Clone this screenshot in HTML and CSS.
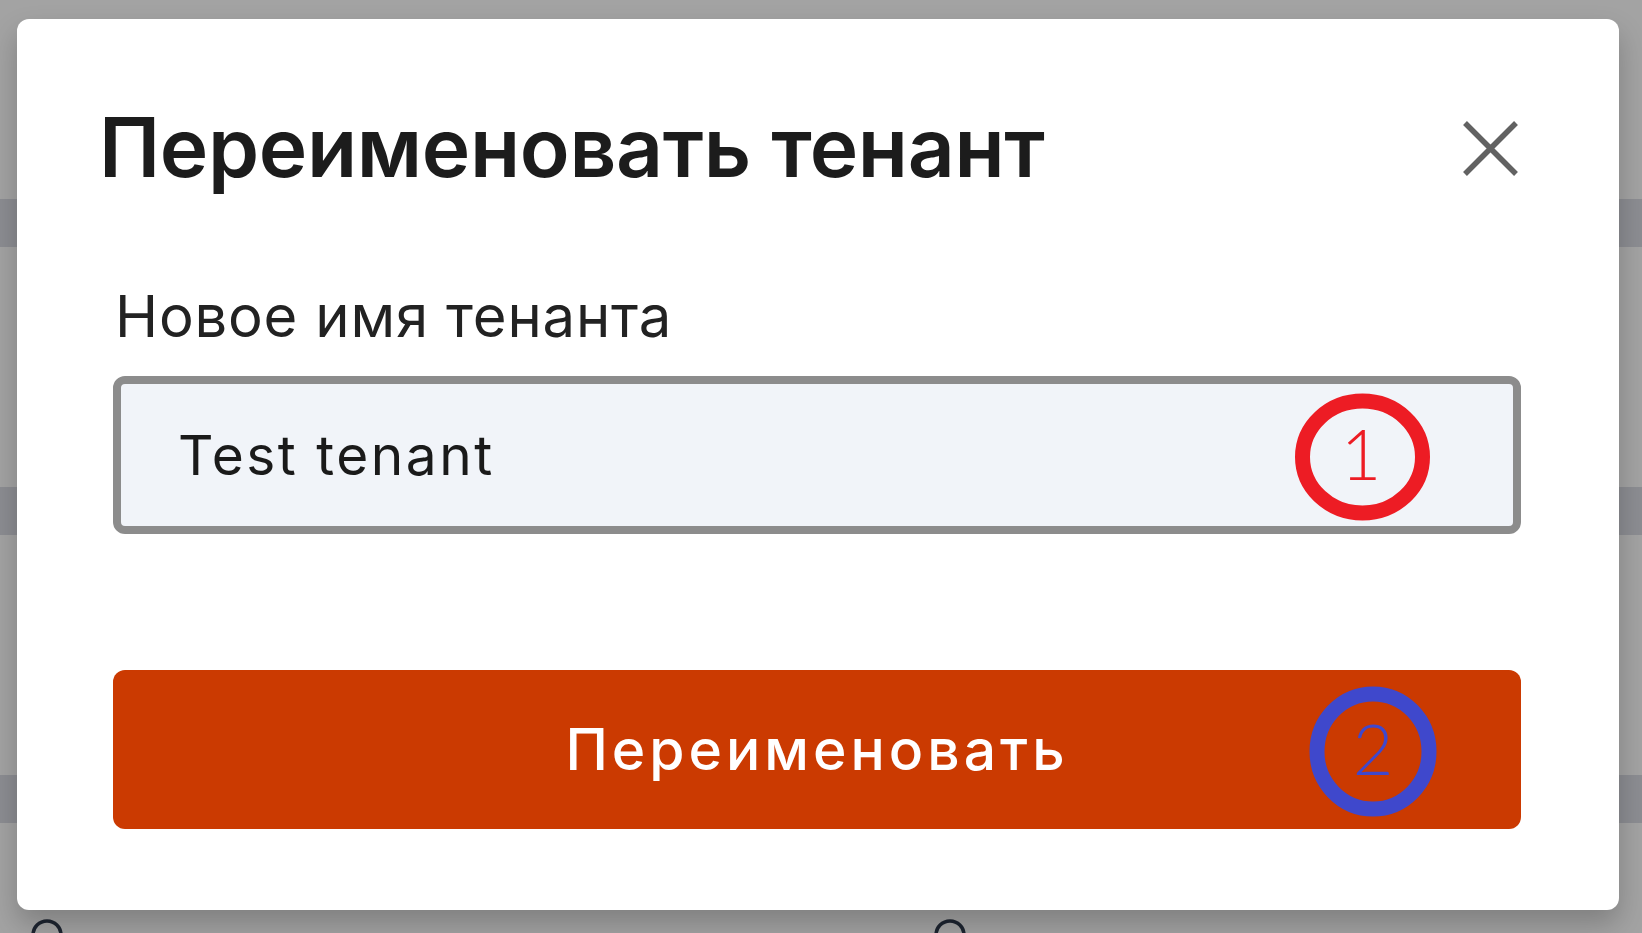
FILE: index.html
```html
<!DOCTYPE html>
<html lang="ru">
<head>
<meta charset="utf-8">
<title>Переименовать тенант</title>
<link rel="stylesheet" href="styles.css">
</head>
<body>
<div class="page">
  <div class="row"></div>
  <div class="row"></div>
  <div class="row"></div>
  <div class="foot">
    <svg class="ring" width="34" height="16" viewBox="0 0 34 16"><circle cx="17" cy="17" r="14" fill="none" stroke="#1d2430" stroke-width="3.5"/></svg>
    <svg class="ring" width="34" height="16" viewBox="0 0 34 16"><circle cx="17" cy="17" r="14" fill="none" stroke="#1d2430" stroke-width="3.5"/></svg>
  </div>
</div>

<div class="modal">
  <div class="header">
    <h1 class="title">Переименовать тенант</h1>
    <button class="close" aria-label="Закрыть">
      <svg width="57" height="57" viewBox="0 0 57 57"><path d="M3 3 L54 54 M54 3 L3 54" stroke="#626262" stroke-width="5.5" fill="none"/></svg>
    </button>
  </div>
  <div class="body">
    <label class="label">Новое имя тенанта</label>
    <div class="field">
      <div class="input">Test tenant</div>
      <svg class="mark mark-1" width="137" height="128" viewBox="0 0 137 128">
        <ellipse cx="68.5" cy="64" rx="60" ry="56" fill="none" stroke="#ed1c24" stroke-width="15"/>
        <text x="67" y="87" text-anchor="middle" class="digit" fill="#ed1c24">1</text>
      </svg>
    </div>
    <div class="action">
      <button class="submit">Переименовать</button>
      <svg class="mark mark-2" width="128" height="131" viewBox="0 0 128 131">
        <ellipse cx="64" cy="65.5" rx="56" ry="57.5" fill="none" stroke="#3f48cc" stroke-width="15"/>
        <text x="64" y="89" text-anchor="middle" class="digit" fill="#3f48cc">2</text>
      </svg>
    </div>
  </div>
</div>
</body>
</html>
```

FILE: styles.css
```css
* { box-sizing: border-box; }

html, body {
  margin: 0;
  padding: 0;
}

body {
  width: 1642px;
  height: 933px;
  overflow: hidden;
  background: #a3a3a3;
  font-family: Inter, "Noto Sans", sans-serif;
}

.page {
  display: flex;
  flex-direction: column;
  padding-top: 199px;
}

.row {
  height: 48px;
  margin-bottom: 240px;
  background: #8c8d92;
}

.row:nth-child(3) {
  margin-bottom: 95px;
}

.foot {
  display: flex;
  gap: 869px;
  padding-left: 30px;
}

.ring { display: block; }

.modal {
  position: fixed;
  left: 17px;
  top: 19px;
  width: 1602px;
  height: 891px;
  background: #ffffff;
  border-radius: 12px;
  box-shadow: 0 14px 28px rgba(0, 0, 0, 0.22);
  display: flex;
  flex-direction: column;
  padding: 88px 98px 0 82px;
}

.header {
  display: flex;
  align-items: center;
  justify-content: space-between;
  padding-right: 2px;
  height: 82px;
}

.title {
  margin: 0;
  font-family: Inter, sans-serif;
  font-weight: 600;
  font-size: 82px;
  line-height: 1;
  color: #1c1c1c;
  letter-spacing: -0.35px;
}

.close {
  border: 0;
  padding: 0;
  background: none;
  width: 57px;
  height: 57px;
  display: block;
}

.close svg { display: block; }

.body {
  display: flex;
  flex-direction: column;
  padding-left: 14px;
  padding-top: 98px;
}

.label {
  font-family: Inter, sans-serif;
  font-size: 58px;
  line-height: 1;
  height: 58px;
  padding-left: 2px;
  color: #222222;
  letter-spacing: 0.8px;
}

.field {
  position: relative;
  margin-top: 31px;
}

.input {
  height: 158px;
  border: 8px solid #8c8c8c;
  border-radius: 12px;
  background: #f1f4f9;
  display: flex;
  align-items: center;
  padding-left: 57px;
  font-family: Inter, sans-serif;
  font-size: 55px;
  color: #1a1a1a;
  letter-spacing: 2.5px;
}

.action {
  position: relative;
  margin-top: 136px;
}

.submit {
  display: block;
  width: 100%;
  height: 159px;
  border: 0;
  border-radius: 12px;
  background: #cb3a01;
  color: #ffffff;
  font-family: Inter, sans-serif;
  font-weight: 500;
  font-size: 57px;
  letter-spacing: 4px;
  padding: 0;
}

.mark {
  position: absolute;
  display: block;
}

.mark-1 {
  left: 1181px;
  top: 17px;
}

.mark-2 {
  left: 1196px;
  top: 16px;
}

.digit {
  font-family: Lato, sans-serif;
  font-weight: 300;
  font-size: 70px;
}
```
